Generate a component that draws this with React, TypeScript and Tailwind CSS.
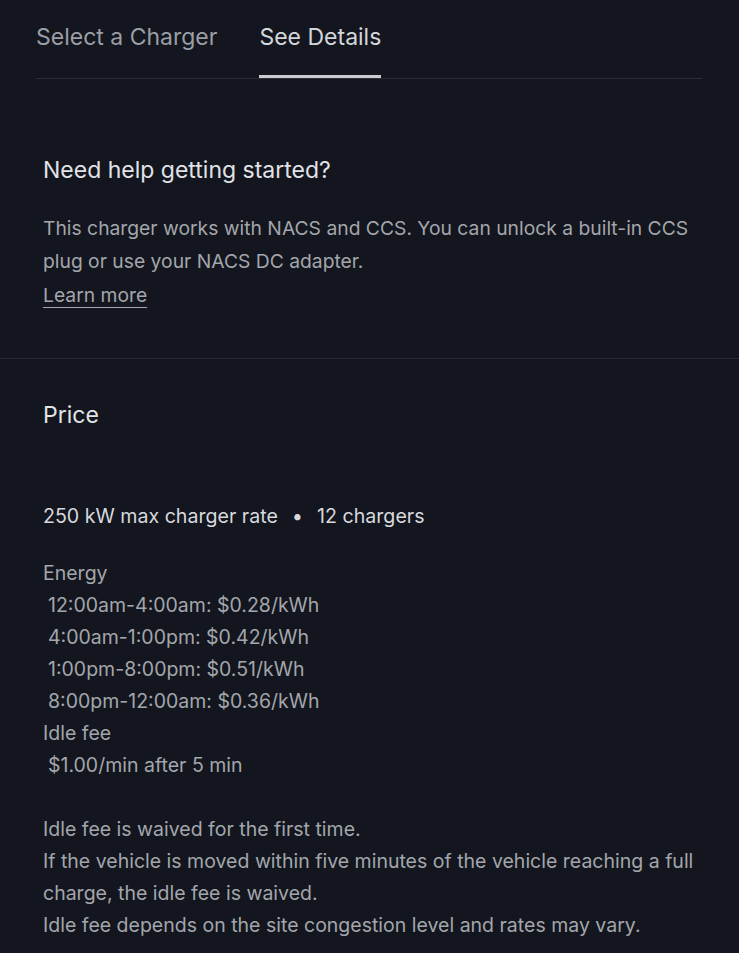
const font = { fontFamily: "Inter, 'Noto Sans', sans-serif" };

const energyRates = [
  "12:00am-4:00am: $0.28/kWh",
  "4:00am-1:00pm: $0.42/kWh",
  "1:00pm-8:00pm: $0.51/kWh",
  "8:00pm-12:00am: $0.36/kWh",
];

const notes = [
  "Idle fee is waived for the first time.",
  "If the vehicle is moved within five minutes of the vehicle reaching a full charge, the idle fee is waived.",
  "Idle fee depends on the site congestion level and rates may vary.",
];

function Tabs() {
  return (
    <div className="ml-[36px] mr-[37px] flex gap-[42px] border-b border-[#2a2d35]">
      <div className="h-[78px] pt-[22px] text-[23px] leading-[30px] text-[#9b9ea5] border-b-[3px] border-transparent cursor-pointer">
        Select a Charger
      </div>
      <div className="h-[78px] pt-[22px] text-[23px] leading-[30px] text-[#d4d6db] border-b-[3px] border-[#c9ccd2] cursor-pointer">
        See Details
      </div>
    </div>
  );
}

export default function App() {
  return (
    <div className="min-h-screen w-full bg-[#13161e] antialiased" style={font}>
      <Tabs />

      <section className="px-[43px] pt-[75px] pb-[46px] border-b border-[#262930]">
        <h2 className="text-[23px] leading-[32px] text-[#e1e3e7]">Need help getting started?</h2>
        <p className="mt-[26px] text-[19.3px] leading-[33px] text-[#a3a6ac]">
          This charger works with NACS and CCS. You can unlock a built-in CCS plug or use your NACS DC adapter.
        </p>
        <a href="#" className="mt-[1px] block w-fit text-[19.3px] leading-[33px] text-[#a3a6ac] underline underline-offset-[5px] decoration-1">
          Learn more
        </a>
      </section>

      <section className="px-[43px] pt-[40px] pb-8">
        <h2 className="text-[23px] leading-[32px] text-[#e1e3e7]">Price</h2>
        <div className="mt-[69px] flex items-center text-[19.6px] leading-[32px] text-[#d7d9de]">
          <span>250 kW max charger rate</span>
          <span className="mx-[14px] text-[20px]">•</span>
          <span>12 chargers</span>
        </div>
        <div className="mt-[25px] text-[19.5px] leading-[32px] text-[#a3a6ac]">
          <div>Energy</div>
          {energyRates.map((r) => (
            <div key={r} className="pl-[5px]">{r}</div>
          ))}
          <div>Idle fee</div>
          <div className="pl-[5px]">$1.00/min after 5 min</div>
        </div>
        <div className="mt-[32px] text-[19.5px] leading-[32px] text-[#a3a6ac]">
          {notes.map((n) => (
            <p key={n}>{n}</p>
          ))}
        </div>
      </section>
    </div>
  );
}
